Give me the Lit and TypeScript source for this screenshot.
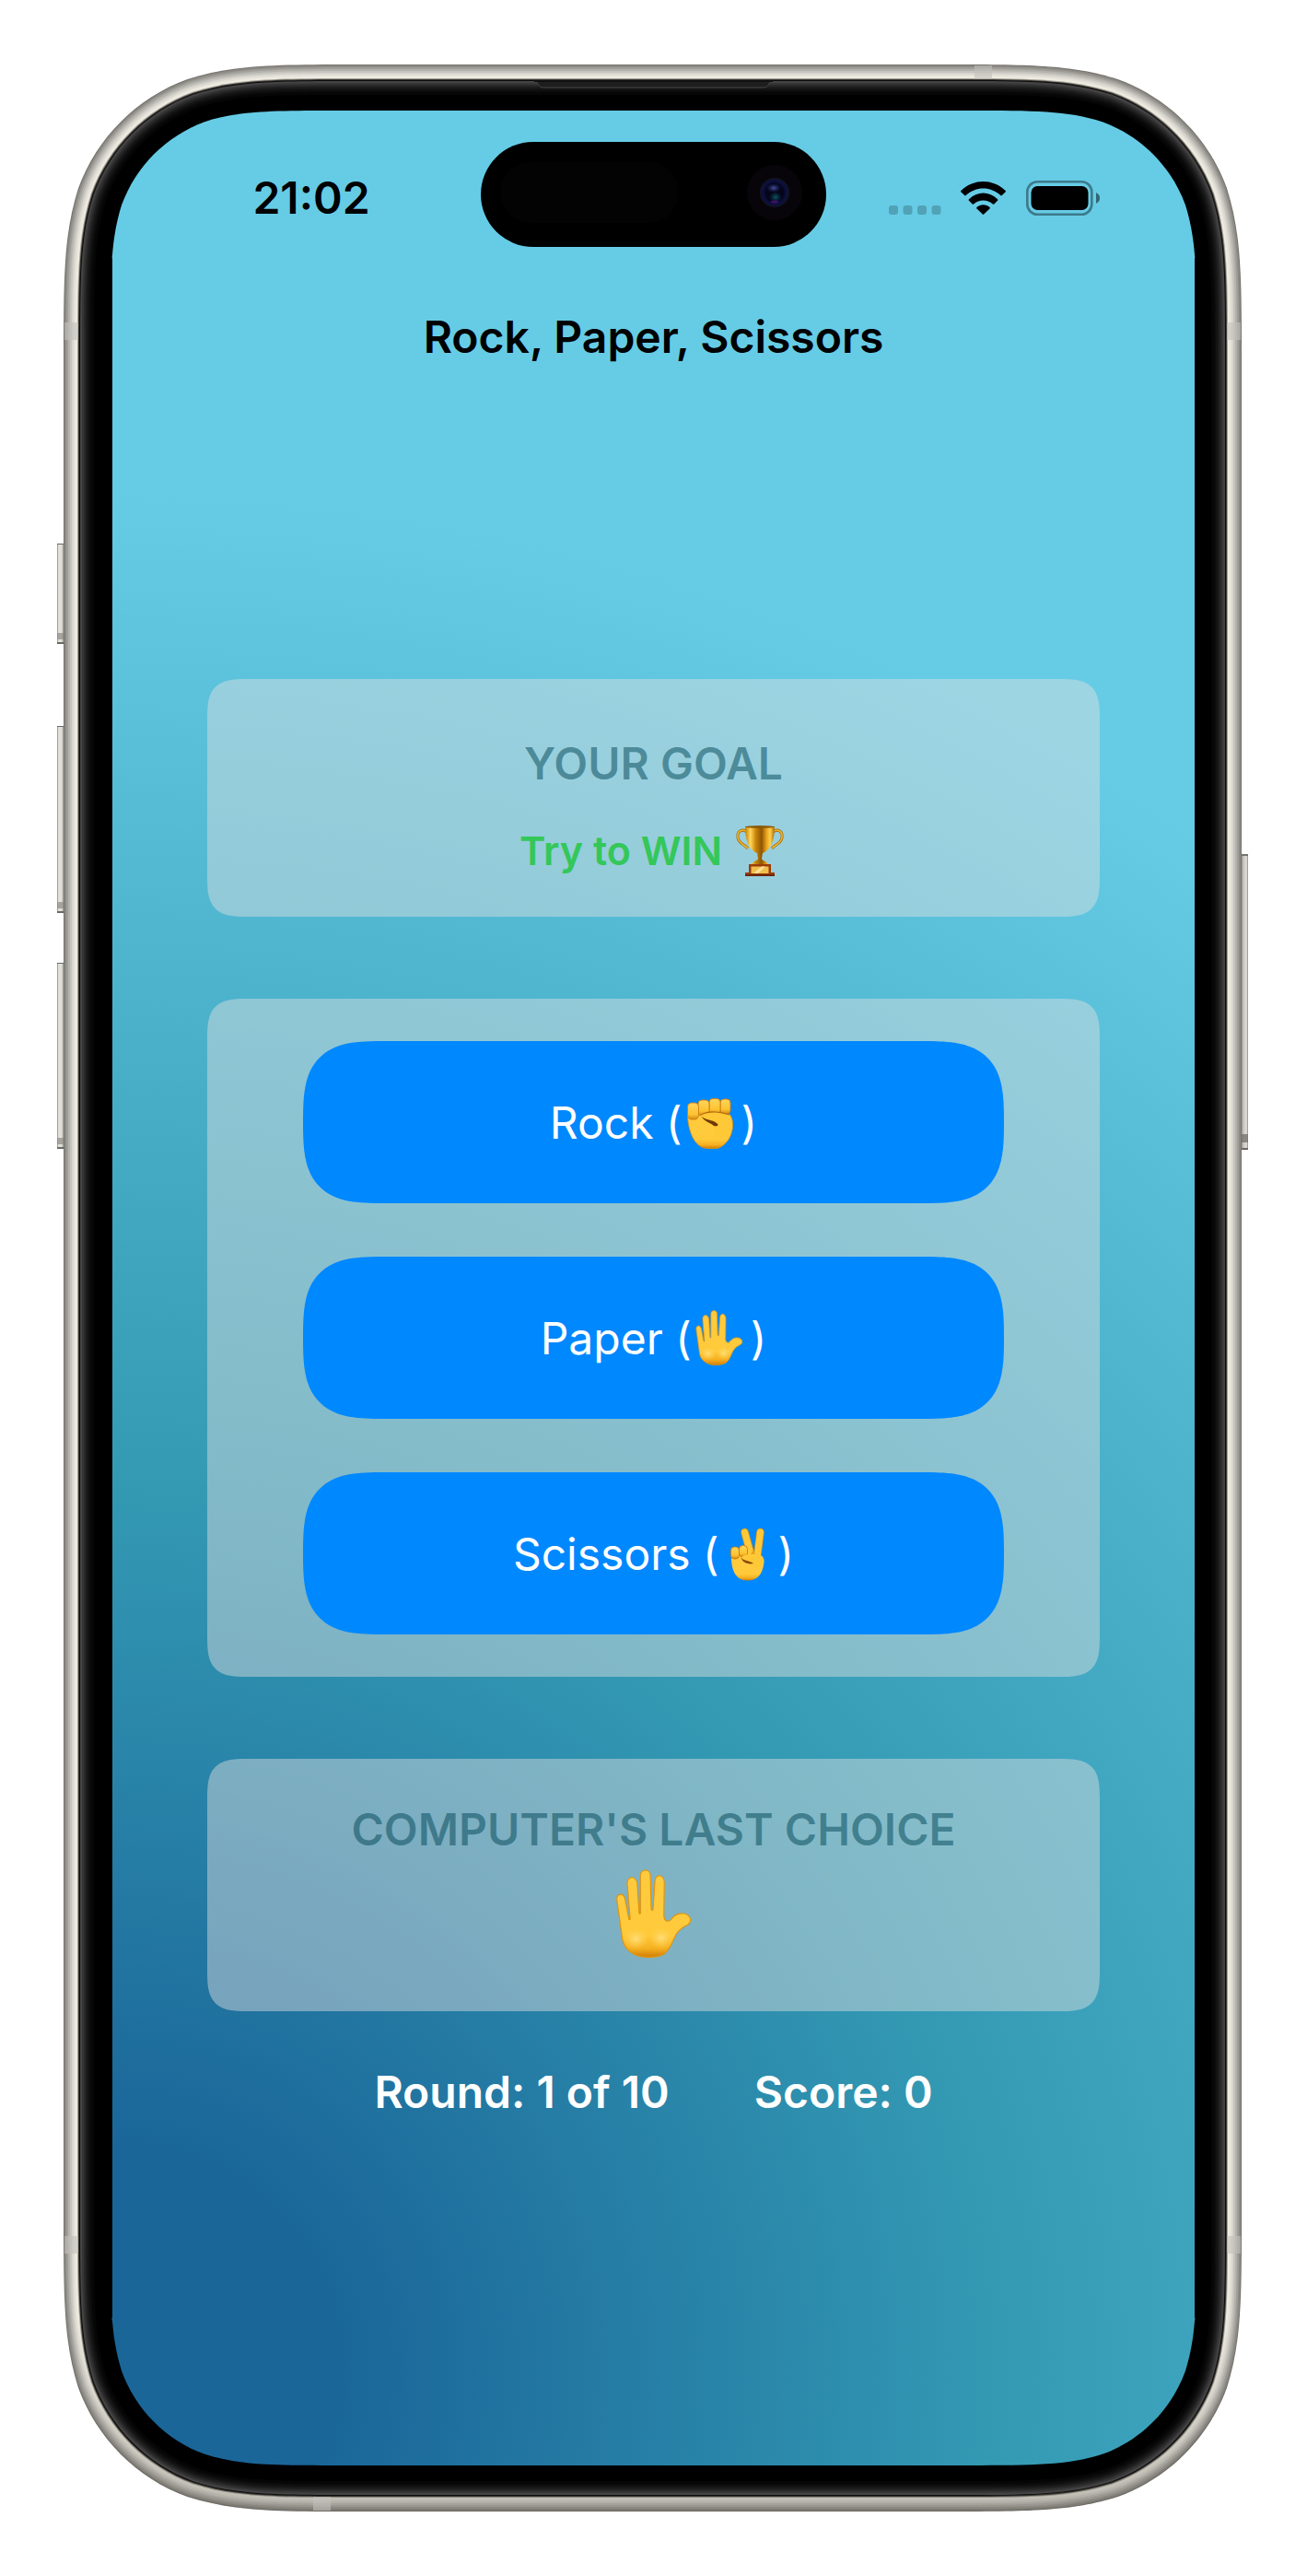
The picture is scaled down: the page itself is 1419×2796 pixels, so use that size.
import { LitElement, html, svg, css } from "lit";
import { customElement, property, state } from "lit/decorators.js";

type Move = "rock" | "paper" | "scissors";

/** Continuous-curvature rounded rectangle between two corner points. */
function squircle(x0: number, y0: number, x1: number, y1: number, r: number): string {
  const a = 1.528665 * r;
  const b = 1.088493 * r;
  const c = 0.868407 * r;
  const d = 0.631494 * r;
  const e = 0.372824 * r;
  const f = 0.16906 * r;
  const g = 0.074911 * r;
  return [
    `M${x0 + a} ${y0}L${x1 - a} ${y0}`,
    `C${x1 - b} ${y0} ${x1 - c} ${y0} ${x1 - d} ${y0 + g}`,
    `C${x1 - e} ${y0 + f} ${x1 - f} ${y0 + e} ${x1 - g} ${y0 + d}`,
    `C${x1} ${y0 + c} ${x1} ${y0 + b} ${x1} ${y0 + a}`,
    `L${x1} ${y1 - a}`,
    `C${x1} ${y1 - b} ${x1} ${y1 - c} ${x1 - g} ${y1 - d}`,
    `C${x1 - f} ${y1 - e} ${x1 - e} ${y1 - f} ${x1 - d} ${y1 - g}`,
    `C${x1 - c} ${y1} ${x1 - b} ${y1} ${x1 - a} ${y1}`,
    `L${x0 + a} ${y1}`,
    `C${x0 + b} ${y1} ${x0 + c} ${y1} ${x0 + d} ${y1 - g}`,
    `C${x0 + e} ${y1 - f} ${x0 + f} ${y1 - e} ${x0 + g} ${y1 - d}`,
    `C${x0} ${y1 - c} ${x0} ${y1 - b} ${x0} ${y1 - a}`,
    `L${x0} ${y0 + a}`,
    `C${x0} ${y0 + b} ${x0} ${y0 + c} ${x0 + g} ${y0 + d}`,
    `C${x0 + f} ${y0 + e} ${x0 + e} ${y0 + f} ${x0 + d} ${y0 + g}`,
    `C${x0 + c} ${y0} ${x0 + b} ${y0} ${x0 + a} ${y0}Z`,
  ].join("");
}

const OUTER = { x0: 69, y0: 70, x1: 1348, y1: 2726, r: 213 };
const HOLE = squircle(120, 120, 1299, 2676, 162);

/** Colours of the rail and bezel, keyed by distance from the outer edge. */
const RINGS: [number, string][] = [
  [0, "#75736d"],
  [1, "#8d8b85"],
  [3, "#a09e98"],
  [5, "#b4b2ac"],
  [7, "#c6c4be"],
  [9, "#d9d6cf"],
  [11, "#e6e3da"],
  [13, "#eeebe1"],
  [15, "#a5a199"],
  [16, "#3c3934"],
  [17, "#0c0c0c"],
  [18, "#444444"],
  [20, "#363636"],
  [22, "#282828"],
  [24, "#1c1c1c"],
  [26, "#131313"],
  [28, "#0c0c0c"],
  [30, "#060606"],
  [33, "#000000"],
];

const ring = (inset: number) =>
  squircle(OUTER.x0 + inset, OUTER.y0 + inset, OUTER.x1 - inset, OUTER.y1 - inset, OUTER.r - inset);

@customElement("device-frame")
export class DeviceFrame extends LitElement {
  static styles = css`
    :host {
      display: block;
      pointer-events: none;
    }
    .art {
      display: block;
      width: 100%;
      height: 100%;
    }
  `;

  render() {
    const keys = [
      { y: 590, h: 109 },
      { y: 788, h: 203 },
      { y: 1045, h: 202 },
    ];
    return html`
      <svg class="art" viewBox="0 0 1419 2796" preserveAspectRatio="none" aria-hidden="true">
        <defs>
          <linearGradient id="key-left" x1="0" x2="1" y1="0" y2="0">
            <stop offset="0" stop-color="#85837d" />
            <stop offset=".2" stop-color="#e4e2dc" />
            <stop offset=".6" stop-color="#e0ded9" />
            <stop offset="1" stop-color="#85837d" />
          </linearGradient>
          <linearGradient id="key-right" x1="1" x2="0" y1="0" y2="0">
            <stop offset="0" stop-color="#85837d" />
            <stop offset=".2" stop-color="#dddbd5" />
            <stop offset=".6" stop-color="#ccc9c3" />
            <stop offset="1" stop-color="#7e7c76" />
          </linearGradient>
          <linearGradient id="shade" x1="0" x2="0" y1="0" y2="1">
            <stop offset="0" stop-color="#5b5850" stop-opacity="0" />
            <stop offset=".92" stop-color="#5b5850" stop-opacity="0" />
            <stop offset="1" stop-color="#5b5850" stop-opacity=".32" />
          </linearGradient>
          <mask id="glass">
            <rect width="1419" height="2796" fill="#fff" />
            <path d=${HOLE} fill="#000" />
          </mask>
        </defs>
        ${keys.map(
          (k) => svg`
            <rect x="62" y=${k.y} width="8" height=${k.h} rx="1" fill="url(#key-left)" />
            <rect x="62" y=${k.y} width="8" height="1" fill="#6b6963" />
            <rect x="62" y=${k.y + k.h - 12} width="8" height="7" fill="#8d8b85" opacity=".7" />
            <rect x="62" y=${k.y + k.h - 2} width="8" height="2" fill="#6b6963" />`
        )}
        <rect x="1347" y="927" width="8" height="321" rx="1" fill="url(#key-right)" />
        <rect x="1347" y="927" width="8" height="2" fill="#75736d" />
        <rect x="1347" y="1231" width="8" height="9" fill="#75736d" opacity=".8" />
        <rect x="1347" y="1246" width="8" height="2" fill="#6b6963" />
        <g mask="url(#glass)">
          ${RINGS.slice(0, 9).map(([inset, color]) => svg`<path d=${ring(inset)} fill=${color} />`)}
          <path d=${ring(0)} fill="url(#shade)" />
          <g fill="#c0bfba" opacity=".6">
            <path d="M70 350h15v19h-15z" />
            <path d="M1332 350h15v19h-15z" />
            <path d="M70 2427h15v19h-15z" />
            <path d="M1332 2427h15v19h-15z" />
            <path d="M1058 71h19v15h-19z" />
            <path d="M340 2710h19v15h-19z" />
          </g>
          ${RINGS.slice(9).map(([inset, color]) => svg`<path d=${ring(inset)} fill=${color} />`)}
        </g>
        <path d="M120 280h2v2236h-2zM1297 280h2v2236h-2z" fill="#000" />
        <path
          d="M581 88C585 89 584 95 590 95H829C835 95 834 89 838 88Z"
          fill="#1e1e1e"
          stroke="#444"
          stroke-width="1"
        />
        <path d="M580 87h259v2h-259z" fill="#111" />
      </svg>
    `;
  }
}

const handShape = svg`
  <path
    d="M1 34C0 27 8 25 10 33L14 54C14.500 57 16 56 15.500 54L12.500 17C11.500 7 22 6 23.500 16L25.500 48C26 50 27 50 27 48L27 7C27 -1 38 -1 38 7L39 44C39.500 46 41 46 41 44L43 14C43 4 53.500 5 53.500 15L53 51C53 57 57 59 60.500 56C64 51 69 48 75 49C82 50 85 57 80 61C74 64 69 67 66 73C62 81 60 89 53 94C44 98.500 27 98.500 20 94C12 90 8 84 7 77Z"
    fill="url(#skin)"
    stroke="#e0950f"
    stroke-width="1.200"
  />
  <ellipse cx="22" cy="77" rx="14" ry="12" fill="url(#glow)" />
  <ellipse cx="50" cy="76" rx="13" ry="12" fill="url(#glow)" />`;

const fistShape = svg`
  <path
    d="M0.500 18C1 36 8 54 22 54.500H33C43 51 50 40 49.500 28C49 19 46 16 40 15H8Z"
    fill="url(#skin)"
    stroke="#dc8f10"
    stroke-width=".800"
  />
  <g fill="url(#knuckle)" stroke="#c97d12" stroke-width=".900">
    <rect x="36" y="1" width="11" height="16" rx="4" />
    <rect x="24" y=".500" width="12" height="17" rx="4" />
    <rect x="12" y="2" width="12" height="17" rx="4" />
    <rect x=".500" y="5" width="12" height="18" rx="4.500" />
  </g>
  <path
    d="M15 18C24 13 38 15 44 19C51 24 50 34 44 42C38 49 28 44 30 31C27 27 17 27 15 18Z"
    fill="#ffc836"
  />
  <path d="M15 18C24 13 38 15 46 18" fill="none" stroke="#b86b10" stroke-width="1.200" />
  <path d="M15 19C19 24 27 23 32 27C35 29 33 31 29 30C26 27 19 26 15 19Z" fill="#6e3a08" />`;

const victoryShape = svg`
  <g stroke-linecap="round" fill="none">
    <path d="M15.500 5L23 32" stroke="#dc9112" stroke-width="8.500" />
    <path d="M15.500 5L23 32" stroke="#ffc93a" stroke-width="7" />
    <path d="M32.500 5L29 32" stroke="#dc9112" stroke-width="8.500" />
    <path d="M32.500 5L29 32" stroke="#ffc93a" stroke-width="7" />
  </g>
  <path
    d="M1 32C1 45 5 57.500 18 57.500C30 57.500 35 50 36.500 38C37 31 33 29 26 29H10Z"
    fill="url(#skin)"
  />
  <g fill="url(#knuckle)" stroke="#c97d12" stroke-width=".900">
    <rect x=".500" y="21" width="9" height="13" rx="4" />
    <rect x="9.500" y="19.500" width="9" height="12.500" rx="4" />
  </g>
  <path d="M12 32C18 28 29 28 34 31C37 37 33 43 29 44C24 44 25 40 25 39C20 38 14 38 12 32Z" fill="#ffc836" />
  <path d="M11 31C13 37 20 35 25 39C22 40 13 40 11 31Z" fill="#8a4a08" />
  <path d="M22 29L24 25L27 29Z" fill="#e9a51d" />`;

const trophyShape = svg`
  <g fill="none" stroke="#a8700c" stroke-width="3">
    <path d="M13 7C8 3 2 6 3 13C4 20 10 20 14 25" />
    <path d="M41 7C46 3 52 6 51 13C50 20 44 20 40 25" />
  </g>
  <g fill="none" stroke="#f3bb32" stroke-width="1.400">
    <path d="M13 7C8 3 2 6 3 13C4 20 10 20 14 25" />
    <path d="M41 7C46 3 52 6 51 13C50 20 44 20 40 25" />
  </g>
  <path
    d="M11 1H43C43 14 40 26 30 30L29 36C29 38 36 39 36 43H18C18 39 25 38 25 36L24 30C14 26 11 14 11 1Z"
    fill="url(#gold)"
  />
  <ellipse cx="27" cy="1.500" rx="16" ry="1.500" fill="#8d5a06" />
  <path d="M15 42H39V51H43V55H11V51H15Z" fill="#9c3c0a" />
  <path d="M11 53H43V55H11Z" fill="#6e2504" />
  <path d="M17.500 44.500H36.500V52H17.500Z" fill="#f1bd4a" />
  <path d="M20 52L29 44.500H33L25 52Z" fill="#ffe49a" />`;

/** Picture symbol set inside a line of text. */
@customElement("game-symbol")
export class GameSymbol extends LitElement {
  @property() name: Move | "trophy" = "rock";

  static styles = css`
    :host {
      display: inline-block;
      width: 60px;
      height: 62px;
      vertical-align: -13px;
      line-height: 0;
    }
    .picture {
      display: block;
      width: 100%;
      height: 100%;
    }
  `;

  render() {
    const art = {
      rock: { box: "-5 -5 60 62", shape: fistShape, label: "raised fist" },
      paper: { box: "-7 -1 98 100", shape: handShape, label: "raised hand" },
      scissors: { box: "-12 -3 60 62", shape: victoryShape, label: "victory hand" },
      trophy: { box: "-3 -6 60 62", shape: trophyShape, label: "trophy" },
    }[this.name];
    return html`
      <svg class="picture" viewBox=${art.box} role="img" aria-label=${art.label}>
        <defs>
          <linearGradient id="skin" x1="0" x2="0" y1="0" y2="1">
            <stop offset="0" stop-color="#ffca3e" />
            <stop offset=".75" stop-color="#ffca3a" />
            <stop offset=".9" stop-color="#f5b021" />
            <stop offset="1" stop-color="#d07d06" />
          </linearGradient>
          <radialGradient id="glow">
            <stop offset="0" stop-color="#ffde78" />
            <stop offset="1" stop-color="#ffd055" stop-opacity="0" />
          </radialGradient>
          <linearGradient id="knuckle" x1="0" x2="0" y1="0" y2="1">
            <stop offset="0" stop-color="#ffd55c" />
            <stop offset=".7" stop-color="#fcc230" />
            <stop offset="1" stop-color="#d58a14" />
          </linearGradient>
          <linearGradient id="gold" x1="0" x2="1" y1="0" y2="0">
            <stop offset="0" stop-color="#c07f0a" />
            <stop offset=".18" stop-color="#ffd75a" />
            <stop offset=".36" stop-color="#c98508" />
            <stop offset=".56" stop-color="#8c5505" />
            <stop offset=".72" stop-color="#e8a21a" />
            <stop offset=".85" stop-color="#ffcf4d" />
            <stop offset="1" stop-color="#a8690a" />
          </linearGradient>
        </defs>
        ${art.shape}
      </svg>
    `;
  }
}

@customElement("status-bar")
export class StatusBar extends LitElement {
  static styles = css`
    :host {
      display: grid;
      grid-template-columns: 1fr 375px 1fr;
      align-items: center;
      height: 114px;
    }
    .time {
      padding: 8px 0 0 32px;
      text-align: center;
      font-size: 48px;
      font-weight: 600;
      line-height: 60px;
    }
    .island {
      display: flex;
      align-items: center;
      justify-content: space-between;
      box-sizing: border-box;
      height: 114px;
      padding: 0 26px 4px 21px;
      border-radius: 57px;
      background: #000;
    }
    .sensor {
      width: 194px;
      height: 66px;
      border-radius: 33px;
      background: #030303;
    }
    .camera {
      width: 60px;
      height: 60px;
    }
    .icons {
      display: flex;
      align-items: center;
      justify-content: flex-end;
      padding: 8px 103px 0 0;
    }
    .signal {
      width: 57px;
      height: 38px;
      margin-right: 21px;
    }
    .wifi {
      width: 49px;
      height: 38px;
      margin-right: 22px;
    }
    .battery {
      width: 80px;
      height: 38px;
    }
  `;

  render() {
    return html`
      <time class="time">21:02</time>
      <div class="island">
        <div class="sensor"></div>
        <svg class="camera" viewBox="0 0 60 60" aria-hidden="true">
          <defs>
            <radialGradient id="lens">
              <stop offset="0" stop-color="#050518" />
              <stop offset=".6" stop-color="#04041c" />
              <stop offset=".78" stop-color="#0c1040" />
              <stop offset="1" stop-color="#11131f" />
            </radialGradient>
            <radialGradient id="glint">
              <stop offset="0" stop-color="#4a52a0" />
              <stop offset="1" stop-color="#202868" stop-opacity="0" />
            </radialGradient>
            <radialGradient id="teal">
              <stop offset="0" stop-color="#0f5560" />
              <stop offset="1" stop-color="#0b3a4c" stop-opacity="0" />
            </radialGradient>
          </defs>
          <circle cx="30" cy="30" r="30" fill="#08050a" />
          <circle cx="30" cy="30" r="16" fill="url(#lens)" />
          <ellipse cx="29" cy="25" rx="8" ry="5" fill="url(#glint)" />
          <ellipse cx="31" cy="35" rx="7" ry="6" fill="url(#teal)" />
          <ellipse cx="30" cy="40" rx="4" ry="1.500" fill="#3d0f68" />
        </svg>
      </div>
      <div class="icons">
        <svg class="signal" viewBox="0 0 57 38" role="img" aria-label="No signal">
          <g fill="#000" opacity=".2">
            <rect x="0" y="27" width="10" height="10" rx="3" />
            <rect x="15.500" y="27" width="10" height="10" rx="3" />
            <rect x="31" y="27" width="10" height="10" rx="3" />
            <rect x="46.500" y="27" width="10" height="10" rx="3" />
          </g>
        </svg>
        <svg class="wifi" viewBox="0 0 49 38" role="img" aria-label="Wi-Fi">
          <path d="M0.600 10.800C14 -2.400 35 -2.400 48.400 10.800C49.100 11.500 49.100 11.900 48.500 12.500L44.800 16.100C44.200 16.600 43.900 16.600 43.300 16.100C32.500 6 16.500 6 5.700 16.100C5.100 16.600 4.800 16.600 4.200 16.100L0.500 12.500C-0.100 11.900 -0.100 11.500 0.600 10.800Z" />
          <path d="M9 20.200C18 11.200 31 11.200 40 20.200C40.600 20.800 40.600 21.200 40 21.800L36.300 25.400C35.800 25.900 35.400 25.900 34.900 25.400C28.900 20.200 20.100 20.200 14.100 25.400C13.600 25.900 13.200 25.900 12.700 25.400L9 21.800C8.400 21.200 8.400 20.800 9 20.200Z" />
          <path d="M17.500 29C21.500 25.300 27.500 25.300 31.500 29C32.100 29.600 32.100 30 31.500 30.600L25.200 36.600C24.700 37.100 24.300 37.100 23.800 36.600L17.500 30.600C16.900 30 16.900 29.600 17.500 29Z" />
        </svg>
        <svg class="battery" viewBox="0 0 80 38" role="img" aria-label="Battery full">
          <rect x="1.300" y="1.300" width="70" height="35.400" rx="11" fill="none" stroke="#000" stroke-opacity=".4" stroke-width="2.600" />
          <rect x="5.500" y="6" width="62" height="26" rx="7" />
          <path d="M76 13C79.500 15 80 17 80 19C80 21 79.500 23 76 25Z" opacity=".5" />
        </svg>
      </div>
    `;
  }
}

@customElement("app-root")
export class AppRoot extends LitElement {
  @state() private round = 1;
  @state() private score = 0;
  @state() private goalIsWin = true;
  @state() private last: Move = "paper";

  private readonly moves: { id: Move; label: string }[] = [
    { id: "rock", label: "Rock" },
    { id: "paper", label: "Paper" },
    { id: "scissors", label: "Scissors" },
  ];

  static styles = css`
    :host {
      display: block;
      background: #fff;
      font-family: Inter, "Liberation Sans", sans-serif;
    }
    .stage {
      position: relative;
      padding: 120px 122px;
    }
    .frame {
      position: absolute;
      inset: 0;
    }
    .screen {
      display: flex;
      flex-direction: column;
      box-sizing: border-box;
      min-height: calc(100vh - 240px);
      padding-top: 34px;
      border-radius: 130px;
      background: radial-gradient(
        circle at 0 calc(100% - 102px),
        #1a6699 245px,
        #3399b3 947px,
        #66cce6 2040px
      );
    }
    .title {
      margin: 68px 0 0;
      text-align: center;
      font-size: 48px;
      font-weight: 600;
      line-height: 60px;
    }
    .game {
      display: flex;
      flex-direction: column;
      gap: 89px;
      padding: 341px 103px 0;
    }
    .card {
      display: flex;
      flex-direction: column;
      align-items: center;
      border-radius: 32px;
      background: rgba(227, 225, 225, 0.45);
    }
    .goal {
      gap: 34px;
      padding: 62px 0 42px;
    }
    .choices {
      gap: 58px;
      padding: 46px 104px;
    }
    .last {
      gap: 12px;
      padding: 47px 0 57px;
    }
    .caption {
      margin: 0;
      color: rgba(0, 70, 85, 0.5);
      font-size: 48px;
      font-weight: 600;
      line-height: 60px;
    }
    .aim {
      margin: 0;
      color: #34c759;
      font-size: 43px;
      font-weight: 600;
      line-height: 60px;
      white-space: nowrap;
    }
    .trophy {
      margin-top: -8px;
    }
    .move {
      width: 100%;
      height: 176px;
      padding: 0;
      border: 0;
      border-radius: 64px;
      background: #0088ff;
      color: #fff;
      font: 400 48px/60px Inter, "Liberation Sans", sans-serif;
      cursor: pointer;
    }
    @supports (corner-shape: superellipse(1.6)) {
      .card {
        border-radius: 46px;
        corner-shape: superellipse(1.7);
      }
      .move {
        border-radius: 88px;
        corner-shape: superellipse(1.6);
      }
    }
    .inline {
      margin-right: 4px;
    }
    .large {
      width: 98px;
      height: 98px;
    }
    .stats {
      display: flex;
      justify-content: center;
      gap: 92px;
      margin: 58px 0 0;
      color: #fff;
      font-size: 48px;
      font-weight: 600;
      line-height: 60px;
    }
  `;

  private play(move: Move) {
    const order: Move[] = ["rock", "paper", "scissors"];
    const reply = order[Math.floor(Math.random() * 3)];
    const beats = order[(order.indexOf(reply) + 1) % 3];
    const loses = order[(order.indexOf(reply) + 2) % 3];
    this.score += move === (this.goalIsWin ? beats : loses) ? 1 : -1;
    this.last = reply;
    this.goalIsWin = Math.random() < 0.5;
    this.round = (this.round % 10) + 1;
  }

  render() {
    return html`
      <div class="stage">
        <main class="screen">
          <status-bar></status-bar>
          <h1 class="title">Rock, Paper, Scissors</h1>
          <div class="game">
            <section class="card goal">
              <h2 class="caption">YOUR GOAL</h2>
              <p class="aim">
                Try to ${this.goalIsWin ? "WIN" : "LOSE"}
                ${this.goalIsWin ? html`<game-symbol class="trophy" name="trophy"></game-symbol>` : ""}
              </p>
            </section>
            <section class="card choices">
              ${this.moves.map(
                (m) => html`<button class="move" type="button" @click=${() => this.play(m.id)}>${m.label} (<game-symbol class="inline" name=${m.id}></game-symbol>)</button>`
              )}
            </section>
            <section class="card last">
              <h2 class="caption">COMPUTER'S LAST CHOICE</h2>
              <game-symbol class="large" name=${this.last}></game-symbol>
            </section>
          </div>
          <div class="stats">
            <span>Round: ${this.round} of 10</span>
            <span>Score: ${this.score}</span>
          </div>
        </main>
        <device-frame class="frame"></device-frame>
      </div>
    `;
  }
}
